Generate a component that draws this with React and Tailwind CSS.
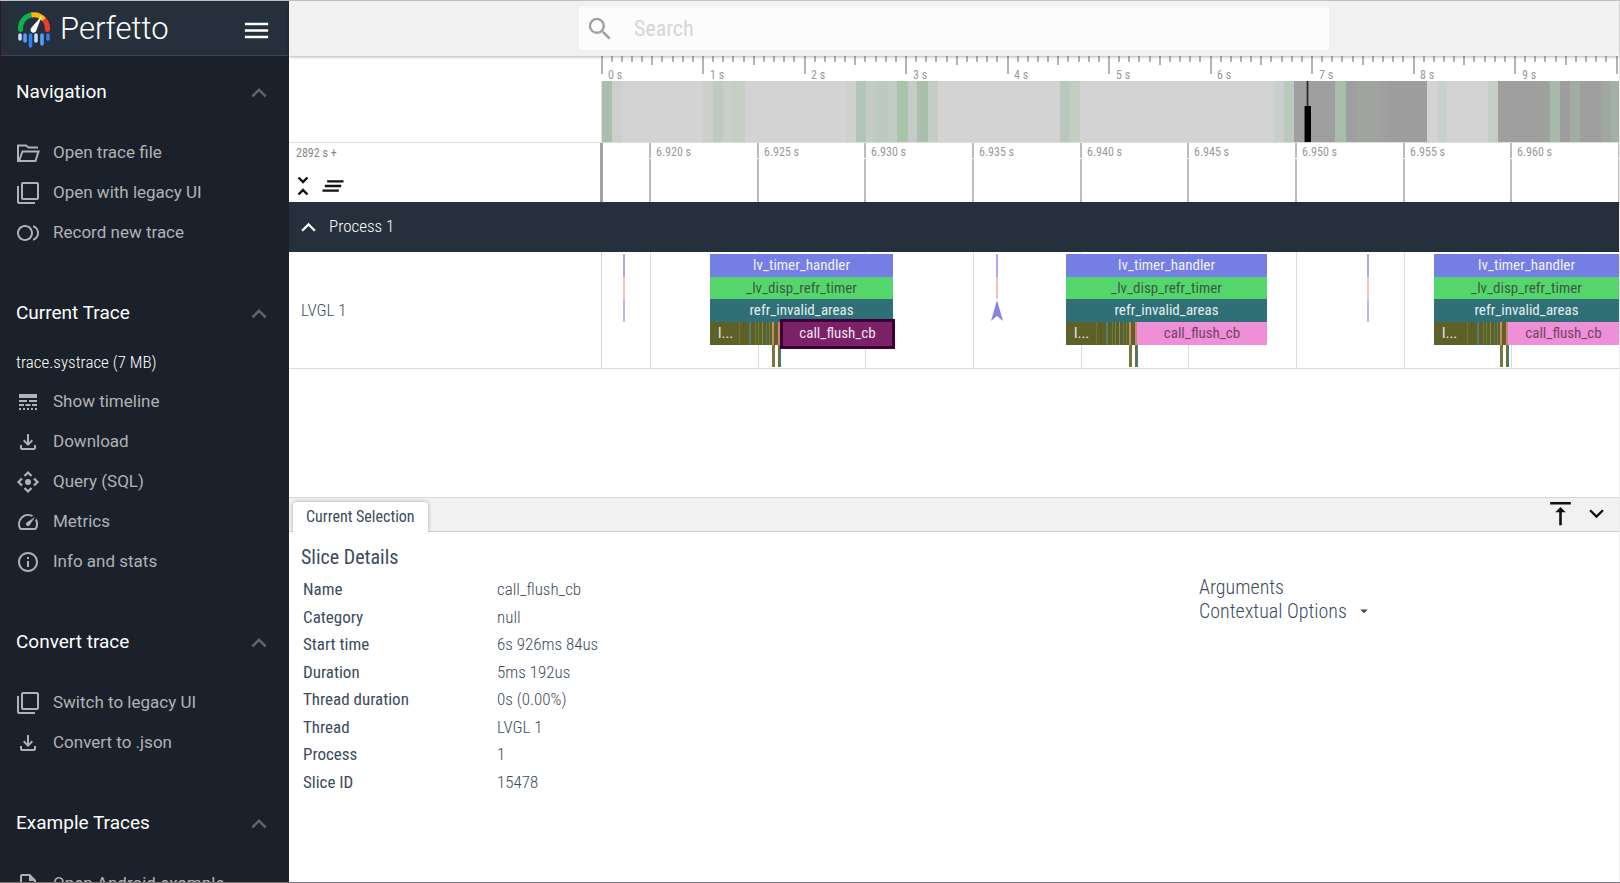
import { useState } from 'react';
import {
    MdClearAll,
    MdArrowDropDown,
    MdFilterNone,
    MdKeyboardArrowDown,
    MdKeyboardArrowUp,
    MdLineStyle,
    MdMenu,
    MdOutlineDescription,
    MdOutlineFiberSmartRecord,
    MdOutlineFileDownload,
    MdOutlineInfo,
    MdOutlineSpeed,
    MdSearch,
    MdUnfoldLess,
    MdVerticalAlignTop,
} from 'react-icons/md';

function FolderOpenIcon({ className }) {
    return (
        <svg className={className} viewBox="0 0 24 24" fill="none" stroke="currentColor" strokeWidth="2">
            <path d="M22 6.500H12.500L10 4.500H2V20H19.500L22.500 10.500H6.500L3.200 19.500" />
        </svg>
    );
}

function QueryIcon({ className }) {
    return (
        <svg className={className} viewBox="0 0 24 24" fill="none" stroke="currentColor" strokeWidth="2.200">
            <path d="M8.500 6 12 2.500 15.500 6M8.500 18l3.500 3.500 3.500-3.500M6 8.500 2.500 12 6 15.500M18 8.500l3.500 3.500-3.500 3.500" />
            <circle cx="12" cy="12" r="3" fill="currentColor" stroke="none" />
        </svg>
    );
}

const sections = [
    {
        title: 'Navigation',
        items: [
            { icon: FolderOpenIcon, label: 'Open trace file' },
            { icon: MdFilterNone, label: 'Open with legacy UI' },
            { icon: MdOutlineFiberSmartRecord, label: 'Record new trace' },
        ],
    },
    {
        title: 'Current Trace',
        file: 'trace.systrace (7 MB)',
        items: [
            { icon: MdLineStyle, label: 'Show timeline' },
            { icon: MdOutlineFileDownload, label: 'Download' },
            { icon: QueryIcon, label: 'Query (SQL)' },
            { icon: MdOutlineSpeed, label: 'Metrics' },
            { icon: MdOutlineInfo, label: 'Info and stats' },
        ],
    },
    {
        title: 'Convert trace',
        items: [
            { icon: MdFilterNone, label: 'Switch to legacy UI' },
            { icon: MdOutlineFileDownload, label: 'Convert to .json' },
        ],
    },
    {
        title: 'Example Traces',
        items: [{ icon: MdOutlineDescription, label: 'Open Android example' }],
    },
];

// Overview heat map: [width, colour]
const heat = [
    [1, '#e4e4e4'], [10, '#a9bfae'], [10, '#cbd0cc'], [81, '#d3d3d3'], [10, '#ccd0cc'],
    [10, '#bdcabf'], [10, '#c8cfc9'], [12, '#c5cdc5'], [101, '#d3d3d3'], [10, '#cfd1cf'],
    [10, '#b1c6b8'], [10, '#c2ccc4'], [12, '#bccabf'], [9, '#c2ccc4'], [11, '#a9c3ad'],
    [9, '#c4cdc5'], [11, '#a9bfab'], [10, '#c4cdc5'], [122, '#d3d3d3'], [10, '#b9c8bc'],
    [10, '#c3cdc4'], [194, '#d3d3d3'], [10, '#c7d0cb'], [10, '#bac9bc'], [41, '#9f9f9f'],
    [11, '#a7bea9'], [11, '#9f9f9f'], [21, '#a0a39e'], [8, '#9fa19f'], [41, '#9e9e9e'],
    [11, '#d3d3d3'], [9, '#c9cfcb'], [41, '#d3d3d3'], [10, '#c5cdc7'], [41, '#9f9f9f'],
    [11, '#9da29f'], [10, '#a6bbab'], [10, '#9e9e9e'], [10, '#a0ada5'], [21, '#9f9f9f'],
    [10, '#9fa8a0'], [9, '#a2b0a6'],
];

const SECOND = 101.5;
const overviewTicks = Array.from({ length: 101 }, (_, i) => ({
    x: Math.floor((i * SECOND) / 10),
    height: i % 10 === 0 ? 18 : i % 5 === 0 ? 9 : 6,
}));

const GRID_STEP = 107.65;
const gridTicks = Array.from({ length: 10 }, (_, i) => ({
    x: Math.round(49 + i * GRID_STEP),
    label: i < 9 ? `${(6.92 + i * 0.005).toFixed(3)} s` : '',
}));

// Stripes over the short slices: [offset, width, colour]
const stripes = [
    [29, 1, '#6f7238'], [33, 1, '#575c20'], [39, 2, '#4f8070'], [45, 1, '#76793f'], [48, 1, '#5c8f3a'],
    [52, 1, '#8b8b58'], [56, 1, '#4f8070'], [59, 1, '#5c8f3a'], [62, 2, '#c98a70'], [68, 2, '#c9856f'],
];

const groups = [
    { x: 109, width: 183, flush: 70, selected: true },
    { x: 465, width: 201, flush: 71 },
    { x: 833, width: 185, flush: 74 },
];

const instants = [{ x: 23 }, { x: 396, arrow: true }, { x: 767 }];

const details = [
    ['Name', 'call_flush_cb'],
    ['Category', 'null'],
    ['Start time', '6s 926ms 84us'],
    ['Duration', '5ms 192us'],
    ['Thread duration', '0s (0.00%)'],
    ['Thread', 'LVGL 1'],
    ['Process', '1'],
    ['Slice ID', '15478'],
];

function Logo() {
    return (
        <svg width="34" height="38" viewBox="0 0 34 38" fill="none" strokeLinecap="round">
            <path d="M3.500 18.500A13.500 13.500 0 0 1 14 4" stroke="#0db04b" strokeWidth="5" />
            <path d="M28 9.500A13.500 13.500 0 0 1 30.500 18.500" stroke="#f03a2e" strokeWidth="5" />
            <path d="M14.500 4A13.500 13.500 0 0 1 27 8.500" stroke="#fbb50b" strokeWidth="5" strokeLinecap="butt" />
            <path d="M25 4.500 14.500 16.500a3 3 0 1 0 5 2.500Z" fill="#fff" />
            <path d="M3 24v4M19 24v6" stroke="#c5dafc" strokeWidth="3.600" />
            <path d="M8 24v6M25 24v9" stroke="#5b9bf8" strokeWidth="3.600" />
            <path d="M13.500 24v11M31 24v4" stroke="#2f80f5" strokeWidth="3.600" />
        </svg>
    );
}

function SidebarSection({ section }) {
    const [open, setOpen] = useState(true);

    return (
        <section className="mb-6">
            <button
                type="button"
                aria-expanded={open}
                onClick={() => setOpen(!open)}
                className="mb-1 flex h-[73px] w-full items-center justify-between pr-[15px] pl-[15px] text-left text-[19px] text-white"
            >
                {section.title}
                <MdKeyboardArrowUp className="size-[30px] text-[#60666c]" />
            </button>
            {open && section.file && (
                <p className="h-7 pl-[15px] font-['Roboto_Condensed',Roboto,sans-serif] text-[17px] leading-4 font-light text-white">
                    {section.file}
                </p>
            )}
            {open && (
                <ul>
                    {section.items.map(({ icon: Icon, label }) => (
                        <li key={label}>
                            <a href="#" className="flex h-10 items-center gap-[13px] pl-[15px] text-[17px] text-[#b0b3b6]">
                                <Icon className="size-6 shrink-0" />
                                {label}
                            </a>
                        </li>
                    ))}
                </ul>
            )}
        </section>
    );
}

function Sidebar() {
    return (
        <aside className="flex h-full w-[289px] shrink-0 flex-col overflow-hidden border-l border-[#2a1a26] bg-[#1a212a]">
            <header className="flex h-[55px] shrink-0 items-center justify-between border-b border-[#3c4754] bg-[#262f3c] pt-1 pr-[17px] pl-4">
                <div className="flex items-center gap-[9px]">
                    <Logo />
                    <span className="mb-0.5 text-[31px] leading-9 font-light text-white">Perfetto</span>
                </div>
                <button type="button" aria-label="Toggle sidebar">
                    <MdMenu className="size-[31px] text-white" />
                </button>
            </header>
            <nav className="min-h-0 flex-1 overflow-hidden">
                {sections.map((section) => (
                    <SidebarSection key={section.title} section={section} />
                ))}
            </nav>
        </aside>
    );
}

function Overview() {
    return (
        <div className="flex h-[87px] border-b border-[#dcdcdc]">
            <div className="w-[312px] shrink-0" />
            <div className="relative min-w-0 flex-1 overflow-hidden">
                <div className="h-[25px]">
                    {overviewTicks.map((tick) => (
                        <span
                            key={tick.x}
                            className="absolute top-0 w-0.5 bg-[#b4b4b4]"
                            style={{ left: tick.x, height: tick.height }}
                        />
                    ))}
                    {Array.from({ length: 10 }, (_, i) => (
                        <span
                            key={i}
                            className="absolute top-3 text-[12px] leading-[14px] text-[#999]"
                            style={{ left: Math.round(i * SECOND) + 7 }}
                        >
                            {i} s
                        </span>
                    ))}
                </div>
                <div className="flex h-[61px]">
                    {heat.map(([width, color], i) => (
                        <div key={i} className="h-full shrink-0 last:flex-1" style={{ width, backgroundColor: color }} />
                    ))}
                </div>
                {/* Visible window marker */}
                <div className="absolute top-[25px] left-[702px] flex h-[61px] w-[9px] flex-col items-center">
                    <div className="h-[25px] w-[3px] border-x border-[#777] bg-[#222]" />
                    <div className="w-[7px] flex-1 border-l border-[#555] bg-black" />
                </div>
            </div>
        </div>
    );
}

function TimeAxis() {
    return (
        <div className="flex h-[59px]">
            <div className="flex w-[311px] shrink-0 flex-col justify-between pb-0.5 pl-[7px]">
                <span className="pt-[3px] text-[12px] leading-[14px] text-[#888]">2892 s +</span>
                <div className="flex items-center gap-0.5 text-[#111]">
                    <button type="button" aria-label="Collapse all" className="-ml-[7px]">
                        <MdUnfoldLess className="size-7" />
                    </button>
                    <button type="button" aria-label="Clear pinned tracks">
                        <MdClearAll className="size-7" />
                    </button>
                </div>
            </div>
            <div className="relative min-w-0 flex-1 overflow-hidden border-l-3 border-[#a2a2a2]">
                {gridTicks.map((tick) => (
                    <div
                        key={tick.x}
                        className="absolute top-0 h-full border-l-2 border-[#bcbcbc] pt-0.5 pl-[5px] text-[12px] leading-[14px] whitespace-nowrap text-[#999]"
                        style={{ left: tick.x - 3 }}
                    >
                        {tick.label}
                    </div>
                ))}
                <div className="absolute top-[15px] h-px w-full bg-white" />
            </div>
        </div>
    );
}

function SliceGroup({ group }) {
    const { x, width, flush, selected } = group;

    return (
        <div className="absolute top-0.5 text-center text-[15px] leading-[22px]" style={{ left: x, width }}>
            <div className="h-[23px] bg-[#757ee5] text-[#f1f1fc]">lv_timer_handler</div>
            <div className="h-[22px] bg-[#55d66d] text-[#3b5b40]">_lv_disp_refr_timer</div>
            <div className="h-[23px] bg-[#2f7077] text-[#e6eef0]">refr_invalid_areas</div>
            <div className="flex h-[23px]">
                <div className="relative shrink-0 bg-[#5e6127] text-left text-[#ecece4]" style={{ width: flush }}>
                    <span className="pl-2">l...</span>
                    {stripes.map(([left, w, color]) => (
                        <span
                            key={left}
                            className="absolute top-0 h-full"
                            style={{ left: left + flush - 70, width: w, backgroundColor: color }}
                        />
                    ))}
                    <span className="absolute top-full right-[5px] h-[22px] w-[3px] bg-[#75793f]" />
                    <span className="absolute top-full -right-px h-[22px] w-[3px] border-r border-[#37838a] bg-[#68713c]" />
                </div>
                {selected ? (
                    <div className="z-10 -mt-[3px] -mr-0.5 h-[30px] flex-1 border-3 border-[#3b0038] bg-[#7b2168] leading-[22px] text-[#f0e4ee]">
                        call_flush_cb
                    </div>
                ) : (
                    <div className="flex-1 bg-[#ef8fd8] text-[#6d4565]">call_flush_cb</div>
                )}
            </div>
        </div>
    );
}

function Track() {
    return (
        <div className="flex h-[117px] border-b border-[#dadada]">
            <h2 className="flex w-[313px] shrink-0 items-center border-r border-[#c8d2d8] pt-0.5 pl-3 font-['Roboto_Condensed',Roboto,sans-serif] text-[17px] font-light text-[#3c4b5d]">
                LVGL 1
            </h2>
            <div className="relative -ml-px min-w-0 flex-1 overflow-hidden font-['Roboto_Condensed',Roboto,sans-serif]">
                {gridTicks.map((tick) => (
                    <span key={tick.x} className="absolute top-0 h-full w-px bg-[#dcdcdc]" style={{ left: tick.x }} />
                ))}
                {instants.map(({ x, arrow }) => (
                    <div key={x} className="absolute top-0.5 flex w-3 flex-col items-center" style={{ left: x - 6 }}>
                        <span className="h-[23px] w-0.5 bg-[#a9ace9]" />
                        <span className="h-[22px] w-0.5 bg-[#f6c1c1]" />
                        {arrow ? (
                            <svg width="12" height="23" viewBox="0 0 12 23">
                                <path d="M6 1 12 22 6 17 0 22Z" fill="#8785e8" />
                            </svg>
                        ) : (
                            <span className="h-[23px] w-0.5 bg-[#bdb8f2]" />
                        )}
                    </div>
                ))}
                {groups.map((group) => (
                    <SliceGroup key={group.x} group={group} />
                ))}
            </div>
        </div>
    );
}

function DetailsPanel() {
    return (
        <section className="h-[385px] shrink-0 border-t border-[#d8d8d8] font-['Roboto_Condensed',Roboto,sans-serif] text-[#3c4b5d]">
            <div className="flex h-[34px] items-end justify-between border-b border-[#cfcfcf] bg-[#f1f1f1] pr-2 pl-1">
                <button
                    type="button"
                    className="-mb-px h-[30px] rounded-t bg-white px-[13px] text-[16px] shadow-[0_0_4px_rgba(0,0,0,0.3)] [clip-path:inset(-4px_-4px_0_-4px)]"
                >
                    Current Selection
                </button>
                <div className="flex h-full items-center gap-[6px] pb-0.5 text-[#111]">
                    <button type="button" aria-label="Expand panel">
                        <MdVerticalAlignTop className="size-[31px]" />
                    </button>
                    <button type="button" aria-label="Collapse panel">
                        <MdKeyboardArrowDown className="size-[29px]" />
                    </button>
                </div>
            </div>
            <div className="grid grid-cols-[898px_1fr] pl-3">
                <div>
                    <h2 className="pt-3 text-[20px] leading-[26px]">Slice Details</h2>
                    <table className="mt-[5px] ml-0.5 text-left text-[17px] leading-5">
                        <tbody>
                            {details.map(([name, value]) => (
                                <tr key={name} className="odd:h-7 even:h-[27px]">
                                    <th className="w-[194px] font-normal">{name}</th>
                                    <td className="font-light">{value}</td>
                                </tr>
                            ))}
                        </tbody>
                    </table>
                </div>
                <div className="pt-[43px] text-[20px] leading-6 font-light">
                    <h3>Arguments</h3>
                    <button type="button" className="flex items-center gap-2">
                        Contextual Options
                        <MdArrowDropDown className="size-[18px]" />
                    </button>
                </div>
            </div>
        </section>
    );
}

export default function App() {
    return (
        <div className="flex h-screen overflow-hidden border-t border-b border-t-[#c0c0c0] border-b-[#77767b] bg-white font-[Roboto,sans-serif]">
            <Sidebar />
            <main className="flex min-w-0 flex-1 flex-col border-r border-[#ececec]">
                <header className="z-10 flex h-[55px] shrink-0 items-center justify-center bg-[#f1f1f1] shadow-[0_1px_3px_rgba(0,0,0,0.3)]">
                    <label className="flex h-[43px] w-[750px] items-center gap-[19px] rounded-xs bg-[#fcfcfc] pl-[6px]">
                        <MdSearch className="size-[30px] text-[#a2a2a2]" />
                        <input
                            type="text"
                            placeholder="Search"
                            aria-label="Search"
                            className="flex-1 bg-transparent font-['Roboto_Condensed',Roboto,sans-serif] text-[22px] outline-none placeholder:text-[#d6d6d6]"
                        />
                    </label>
                </header>
                <div className="min-h-0 flex-1 overflow-hidden font-['Roboto_Condensed',Roboto,sans-serif]">
                    <Overview />
                    <TimeAxis />
                    <button
                        type="button"
                        className="flex h-[50px] w-full items-center gap-[6px] bg-[#262f3c] pl-[5px] text-left text-[17px] font-light text-white"
                    >
                        <MdKeyboardArrowUp className="size-[29px]" />
                        Process 1
                    </button>
                    <Track />
                </div>
                <DetailsPanel />
            </main>
        </div>
    );
}
